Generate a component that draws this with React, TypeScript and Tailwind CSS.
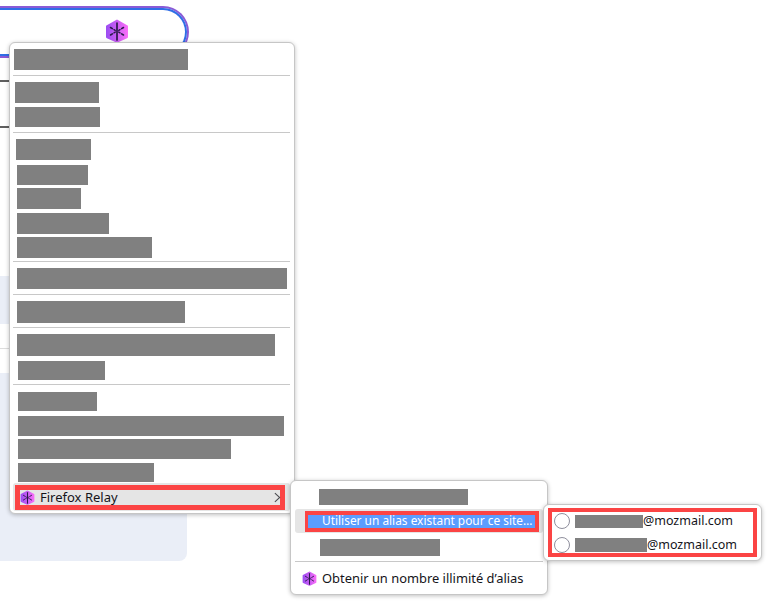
function Logo({ id, className }: { id: string; className: string }) {
  return (
    <svg viewBox="0 0 24 24" className={className}>
      <defs>
        <linearGradient id={id} x1="0" y1="0" x2="1" y2="0">
          <stop offset="0" stopColor="#9a4cf2" />
          <stop offset="1" stopColor="#fb6ef8" />
        </linearGradient>
      </defs>
      <path d="M12 0.6 L22.6 6.4 Q23 6.7 23 7.2 V18 Q23 18.8 22.1 19.3 L12.6 23.6 Q12 23.9 11.4 23.6 L1.9 19.3 Q1 18.8 1 18 V7.2 Q1 6.7 1.4 6.4 Z" fill={`url(#${id})`} />
      <g stroke="#2a1a4a" strokeLinecap="round" fill="none">
        <path d="M12 4 V21" strokeWidth="1.7" />
        <path d="M5.5 8.5 L7.4 9.7 M9 10.7 L10.2 11.4 M18.5 8.5 L16.6 9.7 M15 10.7 L13.8 11.4 M5.5 16 L7.4 14.8 M9 13.8 L10.2 13.1 M18.5 16 L16.6 14.8 M15 13.8 L13.8 13.1" strokeWidth="1.5" />
      </g>
    </svg>
  );
}

function Bar({ className }: { className: string }) {
  return <div className={`bg-[#808080] shrink-0 ${className}`} />;
}

function Sep({ className }: { className: string }) {
  return <div className={`h-px bg-[#c8c8c8] shrink-0 ${className}`} />;
}

function Radio() {
  return <div className="w-[16px] h-[16px] rounded-full border border-[#8f8f9d] bg-white shrink-0" />;
}

export default function App() {
  return (
    <div className="relative w-[769px] h-[601px] overflow-hidden bg-white font-['Noto_Sans','Open_Sans',sans-serif] text-[#20123a]">
      {/* page behind the menus */}
      <div className="flex flex-col w-[189px]">
        <div className="mt-[6px] h-[52px] rounded-r-[26px] border-2 border-l-0 border-[#8a5ad6]">
          <div className="relative h-full rounded-r-[24px] border-2 border-l-0 border-[#2f6ee6]">
            <Logo id="top-logo" className="absolute left-[105px] top-[9px] w-[24px] h-[24px]" />
          </div>
        </div>
        <div className="mt-[22px] h-[2px] w-[9px] bg-[#5f5f5f]" />
        <div className="mt-[44px] h-[2px] w-[9px] bg-[#5f5f5f]" />
        <div className="mt-[148px] h-[48px] w-[187px] bg-[#eaeef7]" />
        <div className="mt-[24px] h-px w-[187px] bg-[#dddddd]" />
        <div className="mt-[24px] h-[188px] w-[187px] bg-[#eaeef7] rounded-br-[8px]" />
      </div>

      {/* main context menu */}
      <div className="absolute left-[9px] top-[42px] w-[286px] h-[472px] flex flex-col bg-white border border-[#c6c6c6] rounded-[6px] shadow-[0_1px_4px_rgba(0,0,0,0.25)]">
        <Bar className="mt-[6px] ml-[4px] w-[174px] h-[21px]" />
        <Sep className="mt-[5px] ml-[3px] w-[277px]" />
        <Bar className="mt-[6px] ml-[5px] w-[84px] h-[21px]" />
        <Bar className="mt-[4px] ml-[5px] w-[85px] h-[20px]" />
        <Sep className="mt-[5px] ml-[3px] w-[277px]" />
        <Bar className="mt-[6px] ml-[6px] w-[75px] h-[21px]" />
        <Bar className="mt-[5px] ml-[7px] w-[71px] h-[20px]" />
        <Bar className="mt-[3px] ml-[7px] w-[64px] h-[21px]" />
        <Bar className="mt-[4px] ml-[7px] w-[92px] h-[21px]" />
        <Bar className="mt-[3px] ml-[7px] w-[135px] h-[21px]" />
        <Sep className="mt-[3px] ml-[3px] w-[277px]" />
        <Bar className="mt-[6px] ml-[7px] w-[270px] h-[21px]" />
        <Sep className="mt-[5px] ml-[3px] w-[277px]" />
        <Bar className="mt-[6px] ml-[7px] w-[168px] h-[22px]" />
        <Sep className="mt-[4px] ml-[3px] w-[277px]" />
        <Bar className="mt-[6px] ml-[7px] w-[258px] h-[22px]" />
        <Bar className="mt-[5px] ml-[8px] w-[87px] h-[19px]" />
        <Sep className="mt-[4px] ml-[3px] w-[277px]" />
        <Bar className="mt-[7px] ml-[8px] w-[79px] h-[19px]" />
        <Bar className="mt-[5px] ml-[8px] w-[266px] h-[20px]" />
        <Bar className="mt-[3px] ml-[8px] w-[213px] h-[20px]" />
        <Bar className="mt-[4px] ml-[8px] w-[136px] h-[19px]" />
        <div className="mt-[1px] ml-[3px] w-[277px] h-[28px] bg-[#e5e5e5] rounded-[3px] flex items-center">
          <div className="ml-[2px] w-[270px] h-[25px] border-[5px] border-[#fb4444] flex items-center">
            <Logo id="relay-row-logo" className="w-[15px] h-[15px] shrink-0" />
            <span className="ml-[5px] text-[13px] leading-none text-[#15141a]">Firefox Relay</span>
            <svg viewBox="0 0 8 12" className="ml-auto -mr-[1px] w-[7px] h-[11px] shrink-0">
              <path d="M1 1 L6.5 6 L1 11" fill="none" stroke="#4a4a4f" strokeWidth="1.2" />
            </svg>
          </div>
        </div>
      </div>

      {/* relay submenu */}
      <div className="absolute left-[290px] top-[480px] w-[258px] h-[115px] flex flex-col bg-white border border-[#c6c6c6] rounded-[6px] shadow-[0_1px_4px_rgba(0,0,0,0.25)]">
        <Bar className="mt-[8px] ml-[28px] w-[149px] h-[16px]" />
        <div className="mt-[4px] ml-[4px] w-[248px] h-[24px] bg-[#e5e5e5] rounded-[3px] flex items-center">
          <div className="ml-[10px] w-[234px] h-[21px] border-[4px] border-l-[3px] border-[#fb4444] bg-[#5b9dff] flex items-center">
            <span className="ml-[14px] text-[11.9px] leading-none text-white whitespace-nowrap">Utiliser un alias existant pour ce site…</span>
          </div>
        </div>
        <Bar className="mt-[6px] ml-[29px] w-[120px] h-[17px]" />
        <Sep className="mt-[5px] ml-[4px] w-[248px]" />
        <div className="mt-[9px] ml-[11px] flex items-center">
          <Logo id="upgrade-logo" className="w-[15px] h-[15px] shrink-0" />
          <span className="ml-[5px] text-[12.9px] leading-none text-[#15141a] whitespace-nowrap">Obtenir un nombre illimité d’alias</span>
        </div>
      </div>

      {/* alias submenu */}
      <div className="absolute left-[543px] top-[504px] w-[219px] h-[57px] bg-white border border-[#c6c6c6] rounded-[6px] shadow-[0_1px_4px_rgba(0,0,0,0.25)] pt-[3px] pl-[4px]">
        <div className="h-[49px] w-[209px] border-[4px] border-[#fb4444] flex flex-col text-[12.5px] leading-none text-[#15141a]">
          <div className="h-[18px] shrink-0 flex items-center">
            <div className="ml-[2px]"><Radio /></div>
            <Bar className="ml-[5px] w-[68px] h-[13px]" />
            <span>@mozmail.com</span>
          </div>
          <div className="mt-[6px] h-[18px] shrink-0 flex items-center">
            <div className="ml-[2px]"><Radio /></div>
            <Bar className="ml-[5px] w-[72px] h-[14px]" />
            <span>@mozmail.com</span>
          </div>
        </div>
      </div>
    </div>
  );
}
